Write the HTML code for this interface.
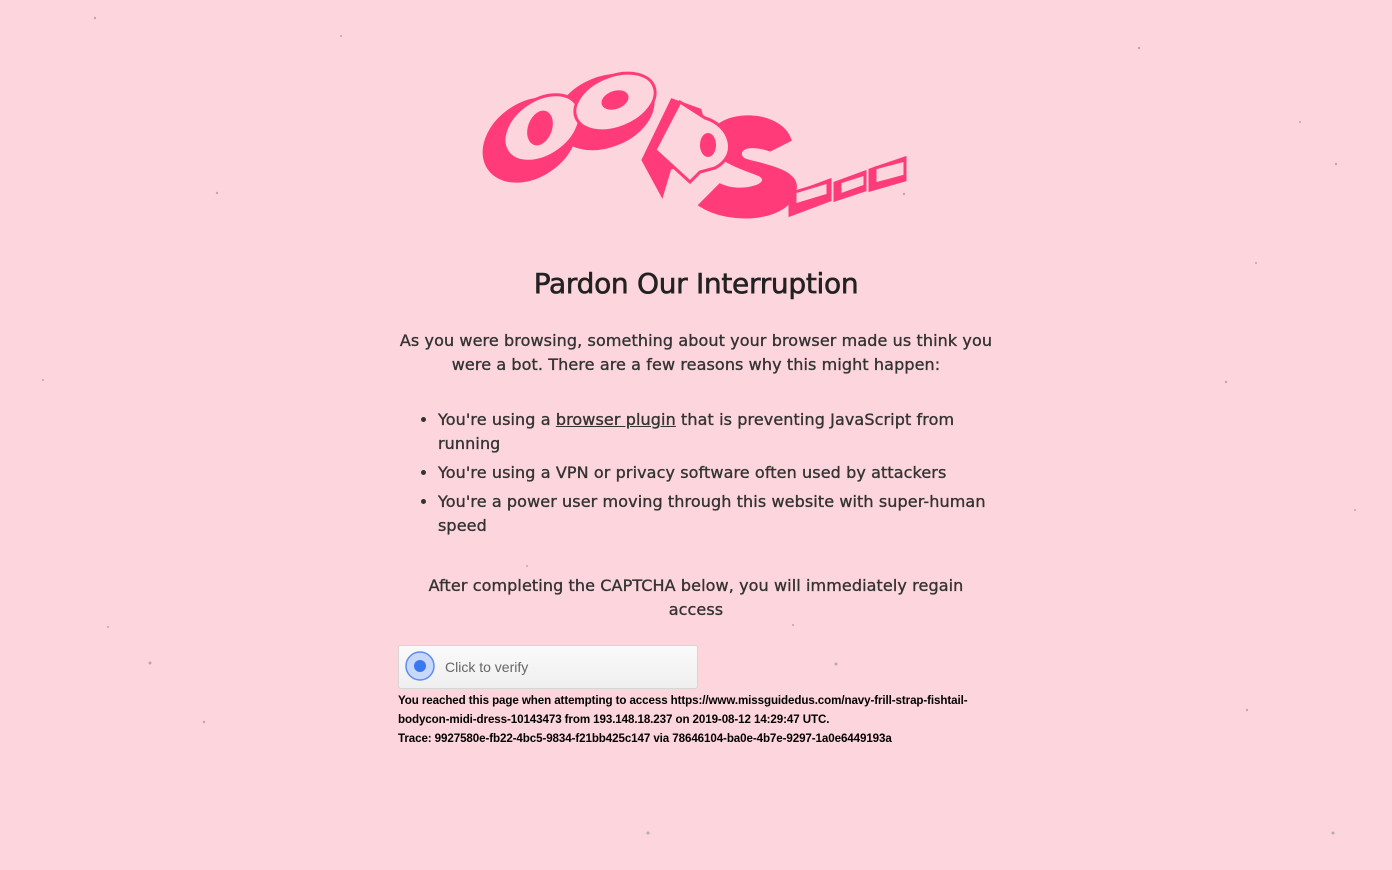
<!DOCTYPE html>
<html><head><meta charset="utf-8"><style>
body{margin:0;width:1392px;height:870px;background:#fdd5dc;font-family:"DejaVu Sans","Liberation Sans",sans-serif;color:#333;position:relative;overflow:hidden}
.c{position:absolute;left:396px;width:600px}
h1{position:absolute;left:0;width:1392px;top:267px;margin:0;text-align:center;font-size:28px;font-weight:normal;color:#222;letter-spacing:-0.3px;-webkit-text-stroke:0.6px #222}
p{margin:0}
.t{font-size:16px;line-height:24px;text-align:center;letter-spacing:0.1px;-webkit-text-stroke:0.35px #333}
ul{margin:0;padding-left:42px;font-size:16px;line-height:24px;letter-spacing:0.1px;width:560px;-webkit-text-stroke:0.35px #333}
li{margin-bottom:5px}
a{color:#333}
.cap{position:absolute;left:398px;top:645px;width:298px;height:42px;border:1px solid #d6d6d6;border-radius:3px;background:linear-gradient(#fafafa,#efefef)}
.small{position:absolute;left:398px;top:691px;width:580px;font-family:"Liberation Sans",sans-serif;font-weight:bold;font-size:11.6px;line-height:19px;color:#000;letter-spacing:-0.1px}
</style></head><body>
<svg width="1392" height="870" style="position:absolute;left:0;top:0">
<g fill="#999" opacity=".7"><circle cx="95" cy="18" r="1.2"/><circle cx="217" cy="193" r="1.2"/><circle cx="150" cy="663" r="1.5"/><circle cx="1336" cy="164" r="1.2"/><circle cx="1139" cy="48" r="1.2"/><circle cx="1226" cy="382" r="1.2"/><circle cx="836" cy="664" r="1.5"/><circle cx="648" cy="833" r="1.5"/><circle cx="1333" cy="833" r="1.5"/><circle cx="1247" cy="710" r="1.2"/><circle cx="204" cy="722" r="1.2"/><circle cx="43" cy="380" r="1"/><circle cx="1300" cy="122" r="1"/><circle cx="527" cy="566" r="1"/><circle cx="793" cy="625" r="1"/><circle cx="1256" cy="263" r="1"/><circle cx="341" cy="36" r="1"/><circle cx="108" cy="627" r="1"/><circle cx="1355" cy="510" r="1"/><circle cx="904" cy="194" r="1.2"/></g>
<g stroke="#ff3b7a" stroke-width="3" fill="#ff3b7a">
<ellipse cx="530" cy="140" rx="50" ry="36" transform="rotate(-35 530 140)"/>
<ellipse cx="605" cy="112" rx="50" ry="34" transform="rotate(-22 605 112)"/>
<path d="M643 160 L672 100 L700 110 L710 145 L690 165 L670 168 L662 195Z"/>
<path d="M700 205 C730 225 790 220 795 190 C800 170 760 165 745 160 C735 155 740 140 770 150 L790 140 C780 110 720 110 712 135 C705 160 750 170 760 175 C775 185 740 195 720 185Z"/>
<path d="M790 215 L830 200 L830 180 L790 195Z M835 200 L865 190 L865 172 L835 183Z M870 190 L905 180 L905 158 L870 170Z"/>
</g>
<g stroke="#ff3b7a" stroke-width="3" fill="#fdd5dc">
<ellipse cx="542" cy="128" rx="42" ry="28" transform="rotate(-35 542 128)"/>
<ellipse cx="615" cy="102" rx="42" ry="26" transform="rotate(-22 615 102)"/>
<path d="M655 150 L680 102 L705 118 C730 125 740 155 715 168 L700 172 L690 182Z"/>
<path d="M795 205 L828 195 L828 182 L795 192Z M840 195 L865 186 L865 174 L840 182Z M875 184 L905 176 L905 160 L875 168Z"/>
</g>
<g fill="#ff3b7a"><ellipse cx="540" cy="128" rx="12" ry="18" transform="rotate(20 540 128)"/><ellipse cx="615" cy="100" rx="14" ry="9" transform="rotate(-20 615 100)"/><ellipse cx="708" cy="145" rx="8" ry="12"/></g>
</svg>
<h1>Pardon Our Interruption</h1>
<div class="c" style="top:329px"><p class="t">As you were browsing, something about your browser made us think you were a bot. There are a few reasons why this might happen:</p></div>
<div class="c" style="top:408px"><ul>
<li>You're using a <a href="#">browser plugin</a> that is preventing JavaScript from running</li>
<li>You're using a VPN or privacy software often used by attackers</li>
<li>You're a power user moving through this website with super-human speed</li></ul></div>
<div class="c" style="top:574px;left:416px;width:560px"><p class="t">After completing the CAPTCHA below, you will immediately regain access</p></div>
<div class="cap">
<svg width="34" height="34" style="position:absolute;left:5px;top:4px"><circle cx="16" cy="16" r="14" fill="#c7d8fb" stroke="#5b8cf5" stroke-width="1.5"/><circle cx="16" cy="16" r="6" fill="#3a78f2"/></svg>
<span style="position:absolute;left:46px;top:13px;font-size:14px;color:#666;font-family:'Liberation Sans',sans-serif">Click to verify</span></div>
<div class="small">You reached this page when attempting to access https://www.missguidedus.com/navy-frill-strap-fishtail-bodycon-midi-dress-10143473 from 193.148.18.237 on 2019-08-12 14:29:47 UTC.<br>Trace: 9927580e-fb22-4bc5-9834-f21bb425c147 via 78646104-ba0e-4b7e-9297-1a0e6449193a</div>
</body></html>
